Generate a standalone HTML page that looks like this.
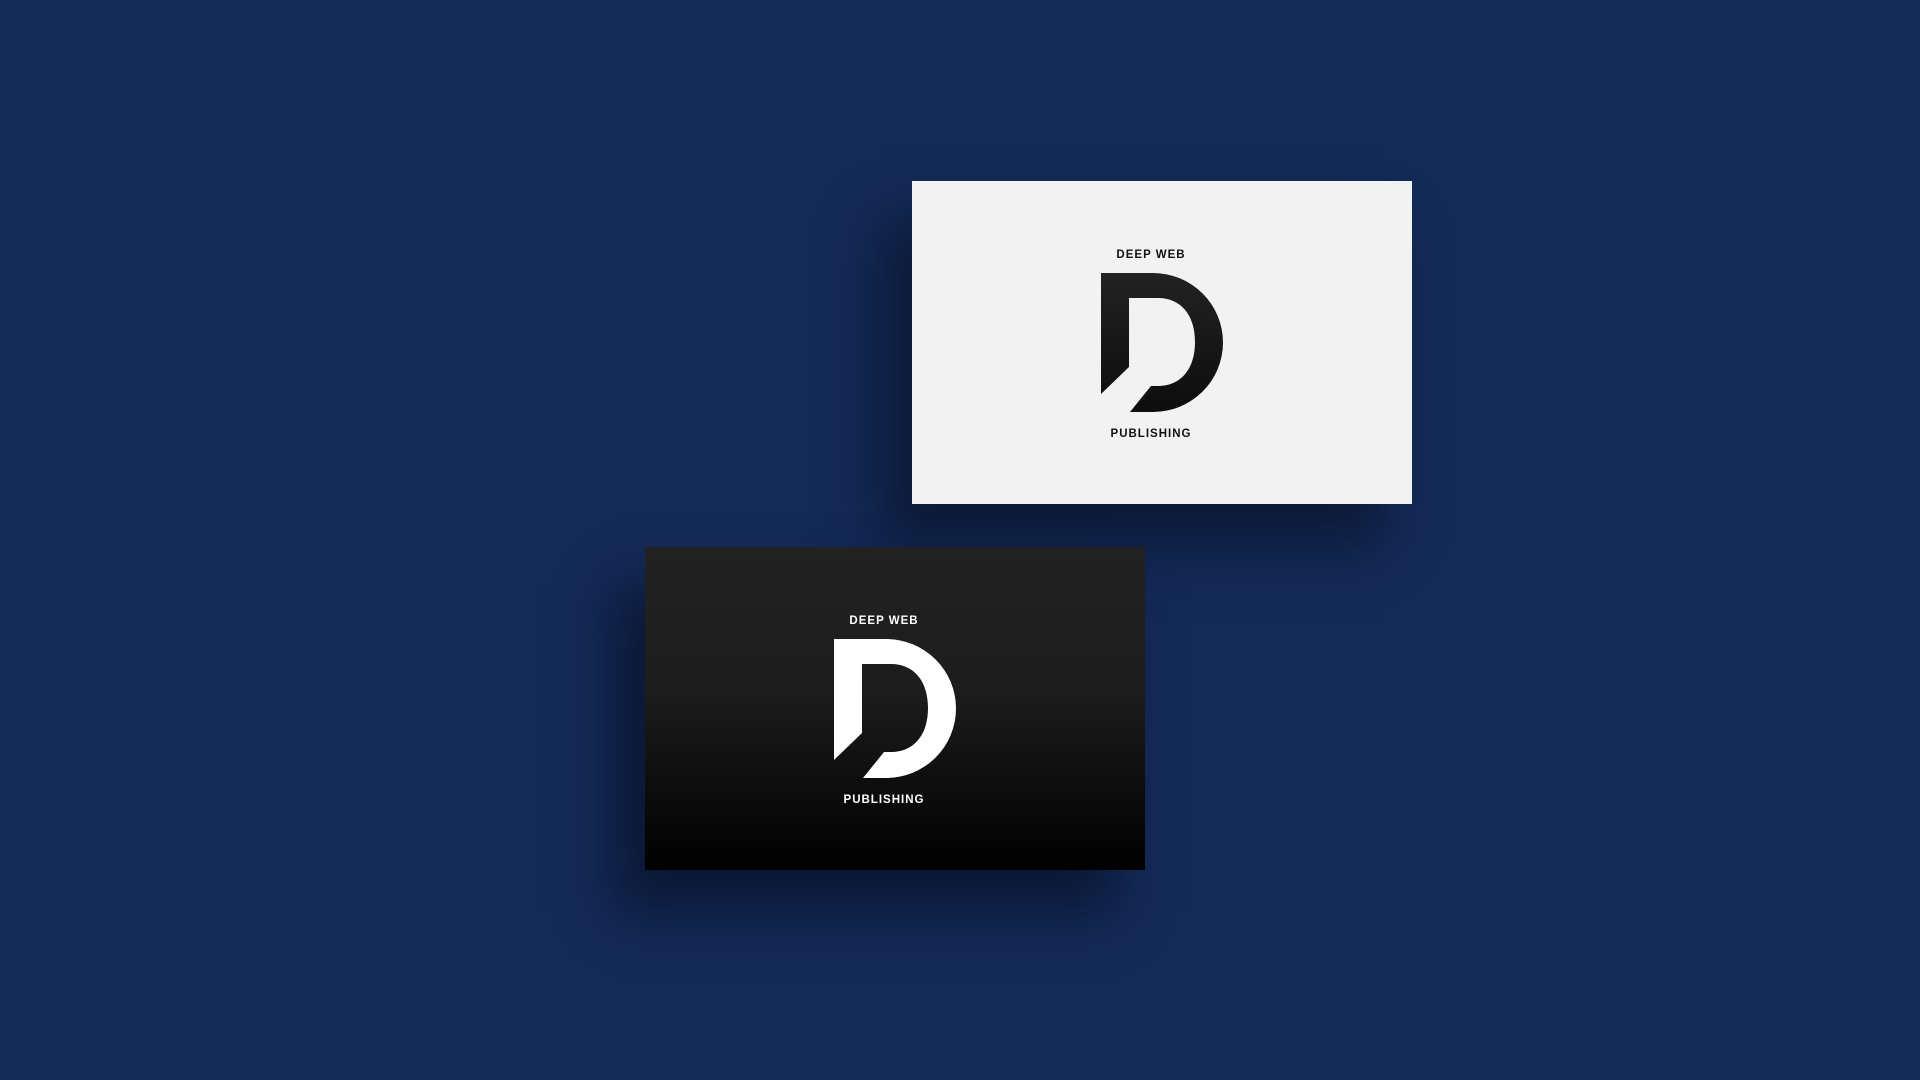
<!DOCTYPE html><html><head><style>
body{margin:0;width:1920px;height:1080px;background:#142a57;overflow:hidden;position:relative;font-family:"Liberation Sans",sans-serif}
.card{position:absolute;width:500px;height:323px}
.w{left:912px;top:181px;background:#f2f2f2;box-shadow:-30px 40px 50px rgba(5,12,30,.55)}
.b{left:645px;top:547px;background:linear-gradient(#222 0%,#1c1c1c 45%,#000 100%);box-shadow:-30px 40px 50px rgba(5,12,30,.6)}
.t{position:absolute;width:200px;text-align:center;font-weight:bold;font-size:11.5px;letter-spacing:1px}
svg{position:absolute;left:0;top:0}
</style></head><body>
<div class="card w">
<div class="t" style="left:139px;top:68px;color:#111">DEEP WEB</div>
<svg width="500" height="323"><defs><linearGradient id="g1" x1="0" y1="0" x2="0" y2="1"><stop offset="0" stop-color="#222"/><stop offset="1" stop-color="#0d0d0d"/></linearGradient></defs>
<path transform="translate(-912,-181)" fill="url(#g1)" d="M1101 273H1153A70 69.5 0 0 1 1153 412H1130L1151 386H1158C1180 386 1195 370 1195 342C1195 314 1180 298 1158 298H1129V367L1101 394Z"/></svg>
<div class="t" style="left:139px;top:247px;color:#111">PUBLISHING</div>
</div>
<div class="card b">
<div class="t" style="left:139px;top:68px;color:#fff">DEEP WEB</div>
<svg width="500" height="323"><path transform="translate(-912,-181)" fill="#fff" d="M1101 273H1153A70 69.5 0 0 1 1153 412H1130L1151 386H1158C1180 386 1195 370 1195 342C1195 314 1180 298 1158 298H1129V367L1101 394Z"/></svg>
<div class="t" style="left:139px;top:247px;color:#fff">PUBLISHING</div>
</div>
</body></html>
